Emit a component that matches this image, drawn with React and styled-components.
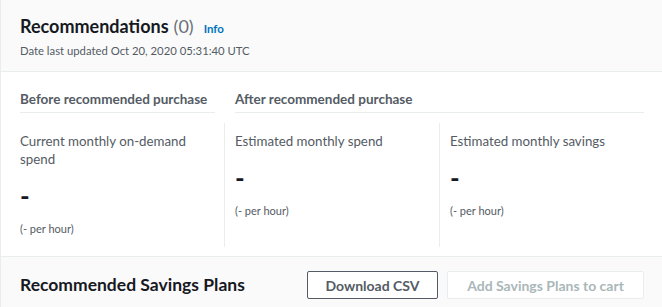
import styled, { createGlobalStyle } from 'styled-components'

const Global = createGlobalStyle`
  html, body { margin: 0; padding: 0; background: #ffffff; }
  body { font-family: Lato, "Open Sans", sans-serif; color: #16191f; }
`

const Card = styled.div`
  width: 662px;
  height: 307px;
  box-sizing: border-box;
  border-left: 1px solid #eaeded;
  overflow: hidden;
  display: flex;
  flex-direction: column;
`

const Header = styled.div`
  background: #fafafa;
  border-bottom: 1px solid #eaeded;
  padding: 14px 20px 0 19px;
  height: 72px;
  box-sizing: border-box;
`

const Title = styled.h2`
  margin: 0;
  font-size: 18px;
  line-height: 24px;
  font-weight: 700;
  color: #16191f;
  display: flex;
  align-items: baseline;
  gap: 5px;
`

const Count = styled.span`
  font-weight: 400;
  color: #687078;
`

const Info = styled.a`
  font-size: 11.5px;
  font-weight: 700;
  color: #0073bb;
  margin-left: 5px;
  text-decoration: none;
`

const Updated = styled.div`
  font-size: 11.3px;
  line-height: 16px;
  color: #545b64;
  margin-top: 2px;
`

const Body = styled.div`
  flex: 1;
  display: grid;
  grid-template-columns: 204px 215px 1fr;
  grid-template-rows: auto 1fr;
  padding: 17px 18px 9px 19px;
  row-gap: 10px;
`

const Group = styled.div`
  grid-column: ${p => p.$span};
  padding: ${p => p.$pad};
`

const GroupTitle = styled.div`
  font-size: 13.5px;
  font-weight: 700;
  line-height: 20px;
  color: #545b64;
  padding-bottom: 3px;
  border-bottom: 1px solid #eaeded;
`

const Metric = styled.div`
  padding: 9px 10px 10px ${p => (p.$first ? '0' : '10px')};
  border-left: ${p => (p.$first ? 'none' : '1px solid #eaeded')};
  display: flex;
  flex-direction: column;
`

const Label = styled.div`
  font-size: 13.3px;
  line-height: 18px;
  color: #545b64;
`

const Value = styled.div`
  font-size: 26px;
  line-height: 32px;
  font-weight: 700;
  color: #16191f;
  margin-top: 12px;
`

const Rate = styled.div`
  font-size: 11px;
  line-height: 16px;
  color: #545b64;
  margin-top: 9px;
`

const Footer = styled.div`
  background: #fafafa;
  border-top: 1px solid #eaeded;
  height: 51px;
  box-sizing: border-box;
  padding: 14px 18px 0 19px;
  display: flex;
  align-items: flex-start;
  gap: 9px;
`

const FooterTitle = styled.h3`
  margin: 0;
  flex: 1;
  font-size: 17.5px;
  font-weight: 700;
  line-height: 28px;
  color: #16191f;
`

const Button = styled.button`
  width: ${p => p.$w}px;
  height: 28px;
  box-sizing: border-box;
  padding: 0;
  font-family: inherit;
  font-size: 14px;
  font-weight: 700;
  border-radius: 2px;
  background: #ffffff;
  border: 1px solid ${p => (p.disabled ? '#eaeded' : '#545b64')};
  color: ${p => (p.disabled ? '#aab7b8' : '#545b64')};
  cursor: ${p => (p.disabled ? 'default' : 'pointer')};
`

const metrics = [
  { label: 'Current monthly on-demand spend' },
  { label: 'Estimated monthly spend' },
  { label: 'Estimated monthly savings' },
]

export default function App() {
  return (
    <>
      <Global />
      <Card>
        <Header>
          <Title>
            <span>Recommendations</span>
            <Count>(0)</Count>
            <Info href="#">Info</Info>
          </Title>
          <Updated>Date last updated Oct 20, 2020 05:31:40 UTC</Updated>
        </Header>

        <Body>
          <Group $span="1" $pad="0 9px 0 0">
            <GroupTitle>Before recommended purchase</GroupTitle>
          </Group>
          <Group $span="2 / span 2" $pad="0 0 0 11px">
            <GroupTitle>After recommended purchase</GroupTitle>
          </Group>

          {metrics.map((m, i) => (
            <Metric key={m.label} $first={i === 0}>
              <Label>{m.label}</Label>
              <Value>-</Value>
              <Rate>(- per hour)</Rate>
            </Metric>
          ))}
        </Body>

        <Footer>
          <FooterTitle>Recommended Savings Plans</FooterTitle>
          <Button $w={131}>Download CSV</Button>
          <Button $w={197} disabled>Add Savings Plans to cart</Button>
        </Footer>
      </Card>
    </>
  )
}
